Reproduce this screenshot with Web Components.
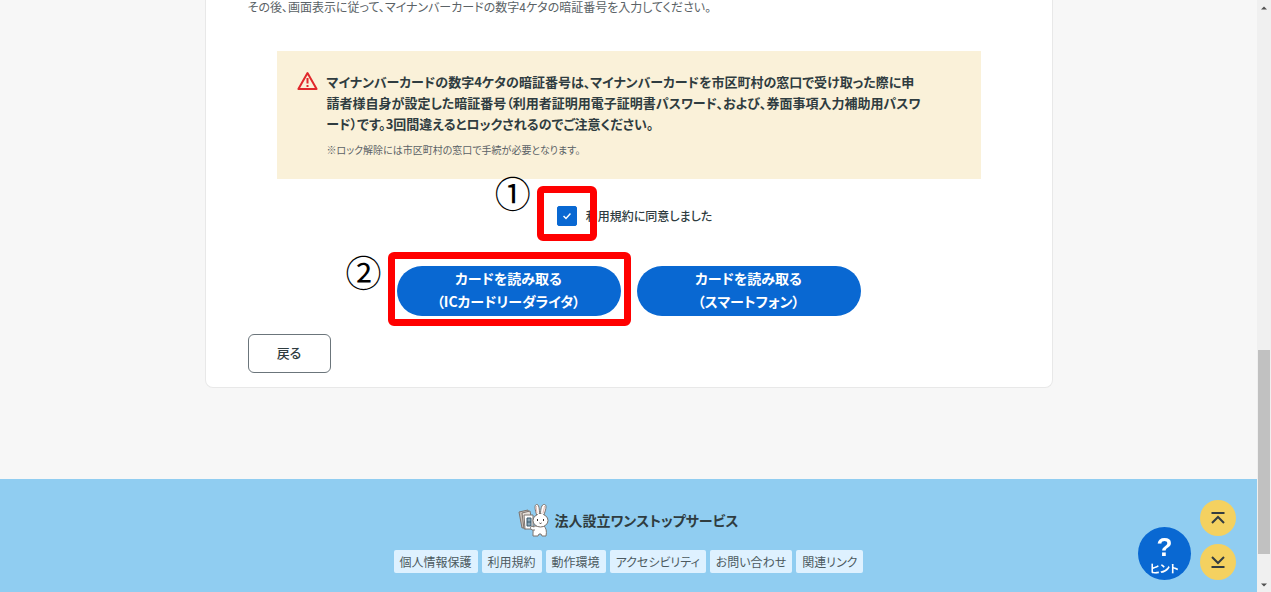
<!DOCTYPE html>
<html lang="ja">
  <head>
    <meta charset="UTF-8" />
    <meta name="viewport" content="width=device-width, initial-scale=1.0" />
    <title>法人設立ワンストップサービス</title>
    <style>
      body {
        margin: 0;
        background: #f7f7f7;
        color: #2f3c40;
        font-family: "Noto Sans CJK JP", sans-serif;
        font-size: 12px;
        font-feature-settings: "palt";
      }
    </style>
    <script type="module">
      const define = (name, html, setup) => {
        const template = document.createElement("template");
        template.innerHTML = html;
        customElements.define(
          name,
          class extends HTMLElement {
            constructor() {
              super();
              const shadow = this.attachShadow({ mode: "open" });
              shadow.appendChild(template.content.cloneNode(true));
              if (setup) setup(this, shadow);
            }
          }
        );
      };

      define(
        "page-shell",
        `
        <style>
          :host {
            display: grid;
            grid-template-columns: minmax(0, 1fr) 14px;
            min-height: 100vh;
          }
          .page {
            display: flex;
            flex-direction: column;
            gap: 91px;
          }
          ::slotted(site-footer) {
            flex: 1;
          }
        </style>
        <div class="page"><slot></slot></div>
        <slot name="scrollbar"></slot>
      `
      );

      define(
        "scroll-rail",
        `
        <style>
          :host {
            display: grid;
            grid-template-rows: 15px 335fr 204fr 23fr 15px;
            justify-items: center;
            align-items: center;
            background: #f0f0f0;
          }
          .thumb {
            grid-row: 3;
            align-self: stretch;
            width: 12px;
            background: #c1c1c1;
          }
          .down {
            grid-row: 5;
          }
          svg {
            display: block;
            fill: #505050;
          }
        </style>
        <svg width="6" height="4" viewBox="0 0 8 4"><path d="M4 0 8 4H0z" /></svg>
        <div class="thumb"></div>
        <svg class="down" width="6" height="4" viewBox="0 0 8 4"><path d="M0 0h8L4 4z" /></svg>
      `
      );

      define(
        "content-card",
        `
        <style>
          :host {
            display: block;
            box-sizing: border-box;
            width: calc(100% - 40px);
            max-width: 848px;
            margin: 0 auto;
            padding: 0 42px 14px;
            background: #fff;
            border: 1px solid #e8e8e8;
            border-top: 0;
            border-radius: 0 0 8px 8px;
          }
        </style>
        <slot></slot>
      `
      );

      define(
        "lead-text",
        `
        <style>
          :host {
            display: block;
            line-height: 14px;
            color: #5a6266;
          }
          p {
            margin: 0;
          }
        </style>
        <p><slot></slot></p>
      `
      );

      define(
        "notice-box",
        `
        <style>
          :host {
            display: flex;
            gap: 9px;
            margin: 37px 29px 0;
            padding: 20px;
            background: #faf1d9;
          }
          svg {
            flex: none;
          }
          p {
            margin: 0 0 6px;
            font-size: 13px;
            font-weight: 700;
            line-height: 21px;
          }
          small {
            display: block;
            font-size: 10px;
            line-height: 19px;
            color: #5a6266;
          }
        </style>
        <svg width="21" height="20" viewBox="0 0 21 20" fill="none" stroke="#e0282c" stroke-width="2" stroke-linejoin="round">
          <path d="M10.5 2 19.6 18H1.4z" />
          <path d="M10.5 7v5.500M10.500 14v2" />
        </svg>
        <div>
          <p><slot></slot></p>
          <small><slot name="note"></slot></small>
        </div>
      `
      );

      // Red frame with a step number around whatever is slotted in.
      define(
        "step-frame",
        `
        <style>
          :host {
            display: block;
            position: relative;
          }
          .frame {
            position: absolute;
            z-index: 1;
            inset: var(--frame-inset);
            border: 7px solid #f00;
            border-radius: 6px;
            pointer-events: none;
          }
          .number {
            position: absolute;
            right: 100%;
            top: var(--number-top);
            margin-right: 13px;
            font-size: 36px;
            line-height: 36px;
            color: #000;
          }
        </style>
        <slot></slot>
        <div class="frame"><span class="number"></span></div>
      `,
        (host, shadow) => {
          shadow.querySelector(".number").textContent = host.getAttribute("number");
        }
      );

      define(
        "agree-check",
        `
        <style>
          :host {
            display: flex;
            justify-content: center;
            align-items: center;
            gap: 9px;
            margin-top: 27px;
            padding-left: 12px;
          }
          step-frame {
            --frame-inset: -20px -20px -15px -20px;
            --number-top: -19px;
          }
          .box {
            display: grid;
            place-items: center;
            width: 20px;
            height: 20px;
          }
          input,
          svg {
            grid-area: 1 / 1;
          }
          input {
            appearance: none;
            width: 20px;
            height: 20px;
            margin: 0;
            border-radius: 2px;
            border: 1px solid #0968d2;
          }
          input:checked {
            background: #0968d2;
          }
          svg {
            pointer-events: none;
          }
          label {
            font-weight: 500;
            line-height: 20px;
          }
        </style>
        <step-frame number="①">
          <div class="box">
            <input type="checkbox" id="agree" checked />
            <svg width="8" height="8" viewBox="0 0 8 8" fill="none" stroke="#fff" stroke-width="1.500"><path d="M.5 4 3 6.500 7.500 1.500" /></svg>
          </div>
        </step-frame>
        <label for="agree"><slot></slot></label>
      `
      );

      define(
        "button-row",
        `
        <style>
          :host {
            display: flex;
            justify-content: center;
            gap: 16px;
            margin-top: 40px;
          }
          ::slotted(step-frame) {
            --frame-inset: -14px -10px -10px -9px;
            --number-top: -6px;
          }
        </style>
        <slot></slot>
      `
      );

      define(
        "read-button",
        `
        <style>
          :host {
            display: block;
          }
          button {
            display: block;
            width: 224px;
            height: 50px;
            padding: 0 0 2px;
            border: 0;
            border-radius: 25px;
            background: #0968d2;
            color: #fff;
            font: inherit;
            font-size: 14px;
            font-weight: 700;
            line-height: 23px;
            font-feature-settings: inherit;
          }
        </style>
        <button type="button"><slot></slot></button>
      `
      );

      define(
        "back-button",
        `
        <style>
          :host {
            display: block;
            margin-top: 18px;
          }
          button {
            width: 83px;
            height: 39px;
            display: block;
            padding: 0 0 2px;
            border: 1px solid #6b757b;
            border-radius: 6px;
            background: #fff;
            color: inherit;
            font: inherit;
            font-size: 13px;
            font-weight: 500;
            font-feature-settings: inherit;
          }
        </style>
        <button type="button"><slot></slot></button>
      `
      );

      define(
        "site-footer",
        `
        <style>
          :host {
            display: flex;
            flex-direction: column;
            align-items: center;
            gap: 13px;
            padding: 24px 20px 19px;
            background: #90cdf1;
          }
          nav {
            display: flex;
            flex-wrap: wrap;
            justify-content: center;
            gap: 4px;
          }
        </style>
        <slot name="brand"></slot>
        <nav><slot></slot></nav>
      `
      );

      define(
        "brand-logo",
        `
        <style>
          :host {
            display: flex;
            align-items: center;
            gap: 4px;
            font-size: 14px;
            font-weight: 700;
            line-height: 20px;
          }
        </style>
        <svg width="32" height="34" viewBox="0 0 32 34" stroke="#7d746e" stroke-width="1" stroke-linejoin="round">
          <path d="M1 9 10 7l3 16-9 2z" fill="#c9c0b8" />
          <path d="M4 10 12 8l3 16-9 2z" fill="#e6e0da" />
          <path d="M6 12h9v14H7z" fill="#fff" />
          <path d="M9 15h4v8H9zM9 19h4" fill="#8ba7b8" stroke="#35566b" />
          <path d="M16 23c-1 3-1 6-1 10h5l1-2h2l1 2h4c1-5 0-8-2-10z" fill="#fff" />
          <path d="M19 13C17 7 16 2 18.500 1.500S21.500 6 21.500 12zM22.500 12c0-6 1-11 4-10.500s1 6-1 11.500z" fill="#fff" />
          <path d="M19 10c-.5-3-1-5-.5-7M25 10c.5-3 1.500-5 1.500-7" fill="none" stroke="#e5b7ae" />
          <ellipse cx="22.500" cy="17.500" rx="7.500" ry="6.500" fill="#fff" />
          <path d="M20 12h5" stroke="#fff" stroke-width="2" />
          <path d="M16 24c-3-2-5 1-2 3h3" fill="#fff" />
          <path d="M19.500 16v2M25.500 16v2M21.500 20q1 1 2 0" fill="none" stroke="#39312c" />
        </svg>
        <span><slot></slot></span>
      `
      );

      define(
        "footer-link",
        `
        <style>
          :host {
            display: block;
          }
          a {
            display: block;
            padding: 0 6px;
            border-radius: 2px;
            background: #def1ff;
            color: #4c5a60;
            font-size: 12px;
            line-height: 23px;
            text-decoration: none;
          }
        </style>
        <a href="#"><slot></slot></a>
      `
      );

      define(
        "floating-tools",
        `
        <style>
          :host {
            position: fixed;
            right: 35px;
            bottom: 12px;
            display: flex;
            align-items: flex-end;
            gap: 9px;
          }
          .jumps {
            display: grid;
            gap: 8px;
          }
          button {
            display: grid;
            place-items: center;
            place-content: center;
            padding: 0;
            border: 0;
            border-radius: 50%;
            font: inherit;
          }
          .hint {
            width: 53px;
            height: 53px;
            background: #0968d2;
            color: #fff;
            font-size: 11px;
            font-weight: 700;
            line-height: 14px;
          }
          .mark {
            font-family: "Liberation Sans", sans-serif;
            font-size: 26px;
            line-height: 28px;
          }
          .jump {
            width: 36px;
            height: 36px;
            background: #f4d160;
          }
        </style>
        <button type="button" class="hint"><span class="mark">?</span><span>ヒント</span></button>
        <div class="jumps">
          <button type="button" class="jump" aria-label="ページの先頭へ">
            <svg width="14" height="12" viewBox="0 0 14 12" fill="none" stroke="#333c40" stroke-width="2"><path d="M.5 1h13M1 11l6-6 6 6" /></svg>
          </button>
          <button type="button" class="jump" aria-label="ページの末尾へ">
            <svg width="14" height="12" viewBox="0 0 14 12" fill="none" stroke="#333c40" stroke-width="2"><path d="M.5 11h13M1 1l6 6 6-6" /></svg>
          </button>
        </div>
      `
      );
    </script>
  </head>
  <body>
    <page-shell>
      <content-card>
        <lead-text>その後、画面表示に従って、マイナンバーカードの数字4ケタの暗証番号を入力してください。</lead-text>
        <notice-box>マイナンバーカードの数字4ケタの暗証番号は、マイナンバーカードを市区町村の窓口で受け取った際に申<br />請者様自身が設定した暗証番号（利用者証明用電子証明書パスワード、および、券面事項入力補助用パスワ<br />ード）です。3回間違えるとロックされるのでご注意ください。<span slot="note">※ロック解除には市区町村の窓口で手続が必要となります。</span></notice-box>
        <agree-check>利用規約に同意しました</agree-check>
        <button-row>
          <step-frame number="②">
            <read-button>カードを読み取る<br />（ICカードリーダライタ）</read-button>
          </step-frame>
          <read-button>カードを読み取る<br />（スマートフォン）</read-button>
        </button-row>
        <back-button>戻る</back-button>
      </content-card>
      <site-footer>
        <brand-logo slot="brand">法人設立ワンストップサービス</brand-logo>
        <footer-link>個人情報保護</footer-link>
        <footer-link>利用規約</footer-link>
        <footer-link>動作環境</footer-link>
        <footer-link>アクセシビリティ</footer-link>
        <footer-link>お問い合わせ</footer-link>
        <footer-link>関連リンク</footer-link>
      </site-footer>
      <scroll-rail slot="scrollbar" aria-hidden="true"></scroll-rail>
    </page-shell>
    <floating-tools></floating-tools>
  </body>
</html>
